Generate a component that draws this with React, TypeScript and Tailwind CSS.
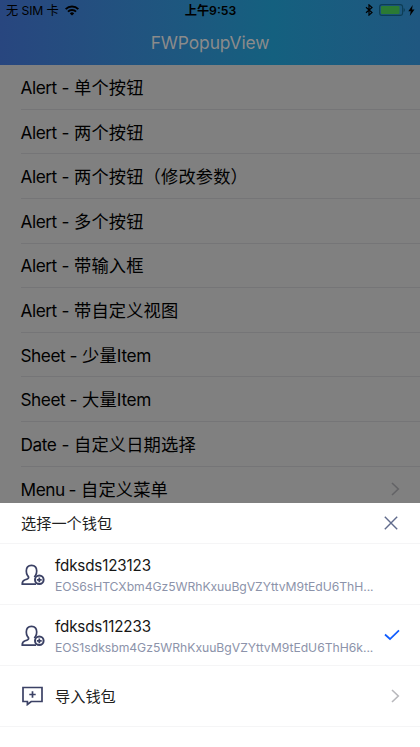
import React from "react";

const latin = "font-['Inter','Noto_Sans_CJK_SC',sans-serif]";

type Item = { head: string; headW: string; cjk: string; tail?: string; arrow?: boolean };

const items: Item[] = [
  { head: "Alert", headW: "w-[48.5px]", cjk: "单个按钮" },
  { head: "Alert", headW: "w-[48.5px]", cjk: "两个按钮" },
  { head: "Alert", headW: "w-[48.5px]", cjk: "两个按钮（修改参数）" },
  { head: "Alert", headW: "w-[48.5px]", cjk: "多个按钮" },
  { head: "Alert", headW: "w-[48.5px]", cjk: "带输入框" },
  { head: "Alert", headW: "w-[48.5px]", cjk: "带自定义视图" },
  { head: "Sheet", headW: "w-[56.5px]", cjk: "少量", tail: "Item" },
  { head: "Sheet", headW: "w-[56.5px]", cjk: "大量", tail: "Item" },
  { head: "Date", headW: "w-[48.5px]", cjk: "自定义日期选择" },
  { head: "Menu", headW: "w-[55.5px]", cjk: "自定义菜单", arrow: true },
];

function Chevron({ className }: { className: string }) {
  return (
    <svg className={className} width="9" height="14" viewBox="0 0 9 14" fill="none" stroke="currentColor" strokeWidth="1.6">
      <path d="M1 1l6.3 6L1 13" />
    </svg>
  );
}

function StatusBar() {
  return (
    <div className="flex h-5 items-center justify-between pl-[6px] pr-[5px] text-[12.2px] text-black">
      <div className="flex w-[130px] items-center">
        <span className="pt-[2px] tracking-[-0.1px]">无 SIM 卡</span>
        <svg className="ml-[6px]" width="14" height="11" viewBox="0 0 14 11" fill="none" stroke="currentColor" strokeWidth="2">
          <path d="M.7 4.1a9 9 0 0 1 12.6 0M3 6.6a5.7 5.7 0 0 1 8 0" />
          <path d="M7 10.6L4.8 8.4a3.1 3.1 0 0 1 4.4 0z" fill="currentColor" stroke="none" />
        </svg>
      </div>
      <span className="pt-[2px] font-semibold">上午9:53</span>
      <div className="flex w-[130px] items-center justify-end">
        <svg width="8" height="12" viewBox="0 0 8 12" fill="none" stroke="currentColor" strokeWidth="1.2">
          <path d="M1 3.3l6 5.2-3 2.6V.9l3 2.6-6 5.2" />
        </svg>
        <svg className="ml-[6px]" width="26" height="12" viewBox="0 0 26 12">
          <rect x=".6" y=".6" width="23" height="10.8" rx="2.4" fill="none" stroke="#0d3d55" strokeWidth="1.1" />
          <rect x="2" y="2" width="18.5" height="8" rx="1" fill="#2b7a34" />
          <path d="M24.6 4v4c.8-.3 1.3-1 1.3-2s-.5-1.7-1.3-2z" fill="#0d3d55" />
        </svg>
        <svg className="ml-[3px]" width="7" height="11" viewBox="0 0 7 11" fill="currentColor">
          <path d="M4.7 0L.3 6.2h2.4L1.8 11l4.7-6.5H4z" />
        </svg>
      </div>
    </div>
  );
}

function UserIcon() {
  return (
    <svg width="24" height="22" viewBox="0 0 24 22" fill="none" stroke="#3b4165" strokeWidth="1.7" strokeLinejoin="round">
      <path d="M15 20.2H1.200c0-2.700.7-3.700 3-4.400 2.200-.7 3.400-1.100 3.400-2.400 0-.8-.6-1.300-1.100-2C5.700 10.300 5.300 8.900 5.300 7c0-3.500 2-5.700 5.200-5.700s5.200 2.200 5.200 5.700c0 1.900-.4 3.300-1.200 4.400-.5.7-.9 1-.9 1.700" />
      <circle cx="18.300" cy="15.800" r="4.300" strokeWidth="2" />
      <path d="M18.300 13.400v4.800M15.900 15.800h4.800" />
    </svg>
  );
}

function Wallet({ name, address, spacing, checked }: { name: string; address: string; spacing: string; checked?: boolean }) {
  return (
    <div className="flex h-[61px] items-center border-b border-[#f5f5f6] pl-[21px] pr-5">
      <span className="pt-px">
        <UserIcon />
      </span>
      <div className="ml-[10px] w-[321px] whitespace-nowrap pt-[3px]">
        <div className="h-[22px] text-[15.2px] leading-[22px] tracking-[-0.16px] text-[#161616]">{name}</div>
        <div className={`h-5 text-[12.2px] leading-5 text-[#8c93aa] ${spacing}`}>{address}</div>
      </div>
      {checked && (
        <svg className="ml-auto" width="16" height="12" viewBox="0 0 16 12" fill="none" stroke="#0f5cff" strokeWidth="1.7">
          <path d="M1 5.5l5 4.5L15 1.3" />
        </svg>
      )}
    </div>
  );
}

export default function App() {
  return (
    <div className={`relative h-[747px] w-[420px] overflow-hidden bg-[#808080] ${latin}`}>
      <header className="h-[65px] bg-linear-to-r from-[#28467f] via-[#14607f] via-65% to-[#1f5780]">
        <StatusBar />
        <div className="flex h-[45px] items-center justify-center pt-px text-[17.4px] tracking-[-0.1px] text-[#8b8b8b]">FWPopupView</div>
      </header>
      <main>
        {items.map((it, i) => (
          <div key={i} className="ml-[20.5px] flex h-[44.64px] items-center whitespace-nowrap border-b border-[#757577] pr-5 pt-[2px] text-[17.25px] text-black">
            <span className={`${it.headW} mr-[5px] flex shrink-0 justify-between tracking-[-0.45px]`}>
              <span>{it.head}</span>
              <span>-</span>
            </span>
            <span className="tracking-[0.15px]">{it.cjk}</span>
            {it.tail && <span className="tracking-[-0.3px]">{it.tail}</span>}
            {it.arrow && <Chevron className="ml-auto text-[#636366]" />}
          </div>
        ))}
      </main>
      <section className="absolute inset-x-0 bottom-0 h-[244px] bg-white">
        <div className="flex h-[41px] items-center justify-between border-b border-[#f5f5f6] pl-[21px] pr-[22px] text-[15.2px] text-[#202020]">
          <span className="pt-[2px]">选择一个钱包</span>
          <svg width="14" height="14" viewBox="0 0 14 14" fill="none" stroke="#606b8c" strokeWidth="1.4">
            <path d="M.8.8l12.4 12.4M13.2.8L.8 13.2" />
          </svg>
        </div>
        <Wallet name="fdksds123123" address="EOS6sHTCXbm4Gz5WRhKxuuBgVZYttvM9tEdU6ThH..." spacing="tracking-[-0.06px]" />
        <Wallet name="fdksds112233" address="EOS1sdksbm4Gz5WRhKxuuBgVZYttvM9tEdU6ThH6k..." spacing="tracking-[-0.03px]" checked />
        <div className="flex h-[61px] items-center border-b border-[#f5f5f6] pl-[22px] pr-5 text-[15.2px] text-[#202020]">
          <svg width="21" height="20" viewBox="0 0 21 20" fill="none" stroke="#3b4165" strokeWidth="1.7">
            <path d="M1 1.5h19v14H9.200l-3.800 3v-3H1z" />
            <path d="M10.500 5.300v6.400M7.300 8.500h6.400" />
          </svg>
          <span className="ml-3 pt-[2px]">导入钱包</span>
          <Chevron className="ml-auto text-[#b8b8bc]" />
        </div>
      </section>
    </div>
  );
}
